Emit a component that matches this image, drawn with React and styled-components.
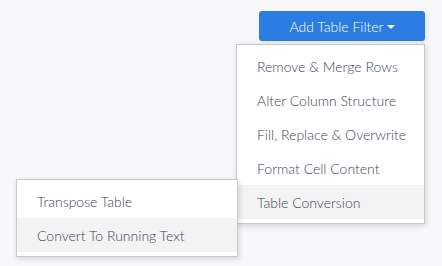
import styled, { createGlobalStyle } from 'styled-components'

const GlobalStyle = createGlobalStyle`
  html, body {
    margin: 0;
    padding: 0;
    background: #f8f8fa;
    font-family: Lato, 'Open Sans', sans-serif;
  }
`

const Page = styled.div`
  position: relative;
  width: 442px;
  height: 266px;
  box-sizing: border-box;
  padding: 11px 17px 0 0;
  display: flex;
  justify-content: flex-end;
  align-items: flex-start;
`

const DropdownWrapper = styled.div`
  position: relative;
`

const FilterButton = styled.button`
  width: 166px;
  height: 30px;
  border: none;
  border-radius: 3px;
  background: #2b7de1;
  color: #fff;
  font-family: Lato, sans-serif;
  font-size: 14px;
  font-weight: 300;
  display: flex;
  align-items: center;
  justify-content: center;
  gap: 3px;
  padding: 0;
  box-shadow: 2px 2px 6px rgba(0, 0, 0, 0.08);
`

const Caret = styled.span`
  width: 0;
  height: 0;
  border-left: 4px solid transparent;
  border-right: 4px solid transparent;
  border-top: 4px solid #fff;
  margin-top: 1px;
`

const Menu = styled.ul`
  position: absolute;
  top: ${({ $top }) => $top}px;
  left: ${({ $left }) => $left}px;
  width: ${({ $width }) => $width}px;
  margin: 0;
  padding: 4px 0;
  list-style: none;
  background: #fff;
  border: 1px solid #c9c9cc;
  box-shadow: 1px 2px 6px rgba(0, 0, 0, 0.15);
  box-sizing: border-box;
`

const MenuItem = styled.li`
  height: 34px;
  display: flex;
  align-items: center;
  padding-left: 20px;
  font-size: 14px;
  font-weight: 300;
  color: #3a4659;
  background: ${({ $active }) => ($active ? '#f3f3f3' : 'transparent')};
  white-space: nowrap;
`

const mainItems = [
  'Remove & Merge Rows',
  'Alter Column Structure',
  'Fill, Replace & Overwrite',
  'Format Cell Content',
  'Table Conversion',
]

const subItems = ['Transpose Table', 'Convert To Running Text']

export default function App() {
  return (
    <>
      <GlobalStyle />
      <Page>
        <DropdownWrapper>
          <FilterButton>
            Add Table Filter
            <Caret />
          </FilterButton>
        </DropdownWrapper>
        <Menu $top={44} $left={236} $width={189}>
          {mainItems.map((item) => (
            <MenuItem key={item} $active={item === 'Table Conversion'}>
              {item}
            </MenuItem>
          ))}
        </Menu>
        <Menu $top={179} $left={16} $width={222}>
          {subItems.map((item) => (
            <MenuItem key={item} $active={item === 'Convert To Running Text'}>
              {item}
            </MenuItem>
          ))}
        </Menu>
      </Page>
    </>
  )
}
